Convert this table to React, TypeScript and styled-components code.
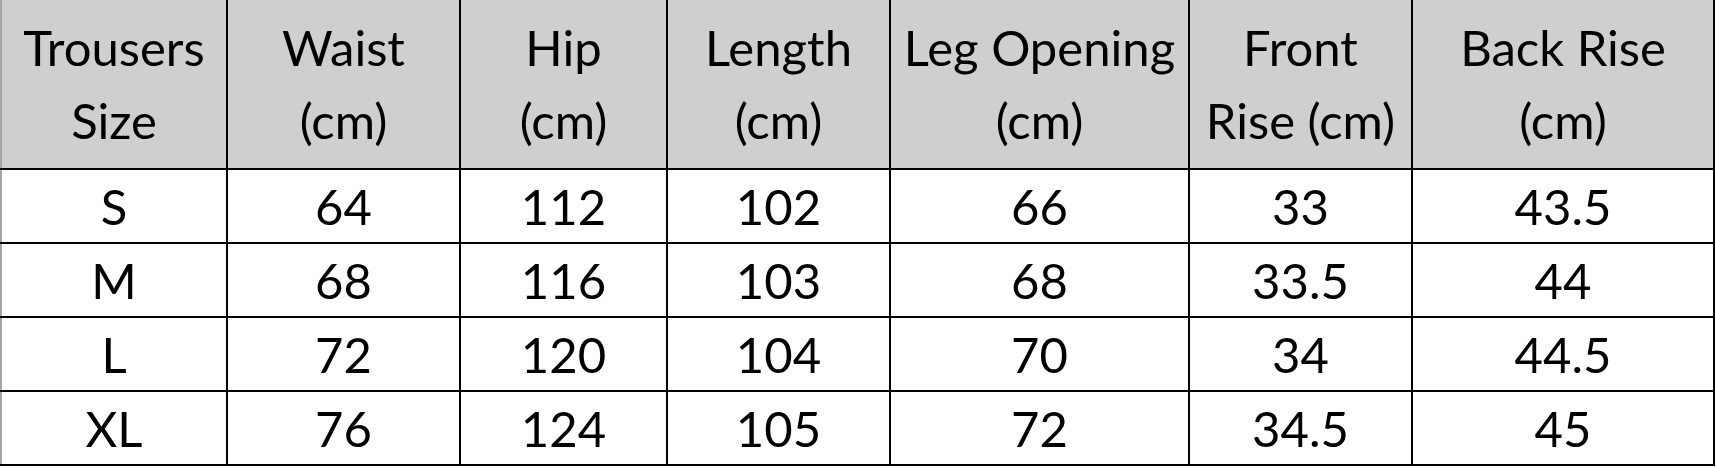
import styled, { createGlobalStyle } from "styled-components";

const GlobalStyle = createGlobalStyle`
  html, body {
    margin: 0;
    padding: 0;
    background: #ffffff;
  }
`;

const columns = [
  { title: ["Trousers", "Size"], width: 226 },
  { title: ["Waist", "(cm)"], width: 233 },
  { title: ["Hip", "(cm)"], width: 207 },
  { title: ["Length", "(cm)"], width: 223 },
  { title: ["Leg Opening", "(cm)"], width: 299 },
  { title: ["Front", "Rise (cm)"], width: 223 },
  { title: ["Back Rise", "(cm)"], width: 302 },
];

const rows = [
  ["S", "64", "112", "102", "66", "33", "43.5"],
  ["M", "68", "116", "103", "68", "33.5", "44"],
  ["L", "72", "120", "104", "70", "34", "44.5"],
  ["XL", "76", "124", "105", "72", "34.5", "45"],
];

const App = () => {
  return (
    <Page>
      <GlobalStyle />
      <SizeTable>
        <colgroup>
          {columns.map((c, i) => (
            <Col key={i} $width={c.width} />
          ))}
        </colgroup>
        <thead>
          <tr>
            {columns.map((c, i) => (
              <HeadCell key={i} $first={i === 0}>
                {c.title[0]}
                <br />
                {c.title[1]}
              </HeadCell>
            ))}
          </tr>
        </thead>
        <tbody>
          {rows.map((r, ri) => (
            <tr key={ri}>
              {r.map((v, ci) => (
                <Cell key={ci} $first={ci === 0}>
                  {v}
                </Cell>
              ))}
            </tr>
          ))}
        </tbody>
      </SizeTable>
    </Page>
  );
};

const Page = styled.div`
  width: 1716px;
  height: 468px;
  background: #ffffff;
  overflow: hidden;
`;

const SizeTable = styled.table`
  border-collapse: collapse;
  table-layout: fixed;
  width: 1715px;
  font-family: Lato, "Liberation Sans", sans-serif;
  color: #000000;
`;

const Col = styled.col<{ $width: number }>`
  width: ${(p) => p.$width}px;
`;

const HeadCell = styled.th<{ $first?: boolean }>`
  height: 168px;
  padding: 0;
  background: #d0cece;
  font-weight: 400;
  font-size: 49px;
  line-height: 73px;
  text-align: center;
  vertical-align: middle;
  border: 2px solid #000000;
  border-top: none;
  border-left-color: ${(p) => (p.$first ? "#a6a6a6" : "#000000")};
  white-space: nowrap;
`;

const Cell = styled.td<{ $first?: boolean }>`
  height: 72px;
  padding: 0;
  font-size: 49px;
  line-height: 1;
  text-align: center;
  vertical-align: middle;
  border: 2px solid #000000;
  border-left-color: ${(p) => (p.$first ? "#a6a6a6" : "#000000")};
`;

export default App;
